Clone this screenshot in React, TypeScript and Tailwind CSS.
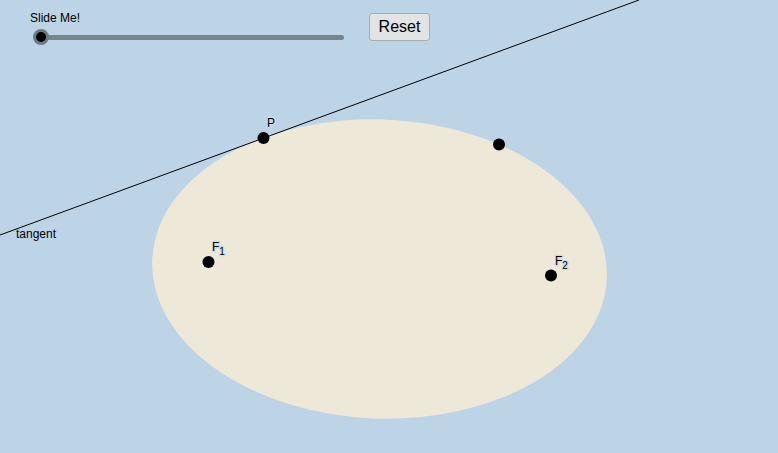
import React from "react"

export default function App() {
  const [t, setT] = React.useState(0)

  return (
    <div className="relative w-[778px] h-[453px] overflow-hidden bg-[#bcd4e6] font-['Liberation_Sans',Arial,sans-serif]">
      {/* canvas drawing */}
      <svg className="absolute inset-0" width="778" height="453" viewBox="0 0 778 453">
        <ellipse cx="379.5" cy="269" rx="227.5" ry="149.5" transform="rotate(2.34 379.5 269)" fill="#ede8d8" />
        <line x1="0" y1="235" x2="639" y2="0" stroke="#000" strokeWidth="1" />
        <g fontSize="12" fill="#000" stroke="#c9dcec" strokeWidth="2.5" paintOrder="stroke" strokeLinejoin="round">
          <text x="267" y="127">P</text>
          <text x="212" y="251">F<tspan fontSize="10" dy="4">1</tspan></text>
          <text x="555" y="265">F<tspan fontSize="10" dy="4">2</tspan></text>
        </g>
        <text x="16" y="238" fontSize="12" fill="#000">tangent</text>
        <circle cx="263.5" cy="138" r="6" fill="#000" />
        <circle cx="499" cy="144.5" r="6" fill="#000" />
        <circle cx="208.5" cy="262" r="6" fill="#000" />
        <circle cx="551" cy="275.5" r="6" fill="#000" />
      </svg>

      {/* slider */}
      <div className="absolute left-[30px] top-[12px] text-[12px] leading-none text-black">Slide Me!</div>
      <div className="absolute left-[33px] top-[29px] w-[314px] h-[16px] flex items-center">
        <div className="absolute left-[8px] right-[3px] h-[5px] rounded-full bg-[#77858e]" />
        <input
          type="range"
          min={0}
          max={100}
          value={t}
          onChange={(e) => setT(Number(e.target.value))}
          className="absolute inset-0 opacity-0 cursor-pointer"
        />
        <div
          className="absolute w-[16px] h-[16px] rounded-full bg-black border-[3px] border-[#6f7a82] pointer-events-none"
          style={{ left: `${t * 3}px` }}
        />
      </div>

      {/* button */}
      <button className="absolute left-[369px] top-[13px] w-[61px] h-[28px] rounded-[3px] border border-[#a8adb0] bg-[#e2e3e3] text-[16px] text-black leading-none" onClick={() => setT(0)}>
        Reset
      </button>
    </div>
  )
}
